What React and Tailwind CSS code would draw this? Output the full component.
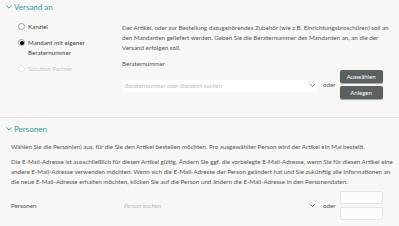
import React from "react";

function Chevron({ className = "" }) {
  return (
    <svg viewBox="0 0 10 6" className={className} fill="none" stroke="currentColor" strokeWidth="1.6" strokeLinecap="round" strokeLinejoin="round">
      <path d="M1 1l4 4 4-4" />
    </svg>
  );
}

function SectionHeader({ title }) {
  return (
    <div className="flex items-center gap-[2px] pl-[6px] text-[#2ea3a3] text-[8px] leading-[10px]">
      <Chevron className="w-[6px] h-[4px]" />
      <span>{title}</span>
    </div>
  );
}

function Radio({ checked, disabled, children }) {
  return (
    <div className={`flex items-start gap-[3px] ${disabled ? "text-[#c8c8c8]" : "text-[#444]"}`}>
      <span
        className={`mt-[1px] w-[7px] h-[7px] shrink-0 rounded-full border flex items-center justify-center bg-white ${
          disabled ? "border-[#e0e0e0]" : "border-[#999]"
        }`}
      >
        {checked && <span className="w-[4px] h-[4px] rounded-full bg-black" />}
      </span>
      <span className="leading-[10px]">{children}</span>
    </div>
  );
}

function ActionButtons({ disabled }) {
  const base = "w-[43px] h-[13px] rounded-[2px] text-[6px] flex items-center justify-center";
  const style = disabled
    ? "border border-[#e6e6e6] bg-[#fbfbfb] text-white"
    : "bg-[#5a605e] text-white shadow-[0_1px_1px_rgba(0,0,0,0.35)]";
  return (
    <div className="flex flex-col gap-[3px]">
      <button className={`${base} ${style}`}>Auswählen</button>
      <button className={`${base} ${style}`}>Anlegen</button>
    </div>
  );
}

function Lines({ lines, className = "" }) {
  return (
    <p className={`leading-[10px] whitespace-nowrap ${className}`}>
      {lines.map((l, i) => (
        <span key={i} className="block">
          {l}
        </span>
      ))}
    </p>
  );
}

export default function App() {
  return (
    <div
      className="w-[399px] h-[226px] overflow-hidden bg-[#f8f7f5] text-[#555] text-[6.22px]"
      style={{ fontFamily: "Lato, 'Noto Sans', sans-serif" }}
    >
      {/* Versand an */}
      <div className="pt-[2px] h-[118px] border-b border-[#e4e3e1]">
        <SectionHeader title="Versand an" />
        <div className="flex mt-[10px]">
          <div className="w-[122px] pl-[18px] flex flex-col gap-[6px]">
            <Radio>Kanzlei</Radio>
            <Radio checked>
              Mandant mit eigener
              <br />
              Beraternummer
            </Radio>
            <Radio disabled>Solution Partner</Radio>
          </div>
          <div className="flex-1">
            <Lines
              className="mt-[1px]"
              lines={[
                "Der Artikel, oder zur Bestellung dazugehörendes Zubehör (wie z.B. Einrichtungsbroschüren) soll an",
                "den Mandanten geliefert werden. Geben Sie die Beraternummer des Mandanten an, an die der",
                "Versand erfolgen soll.",
              ]}
            />
            <div className="mt-[6px] leading-[10px]">Beraternummer</div>
            <div className="flex items-center mt-[1px]">
              <div className="w-[196px] h-[12px] bg-white flex items-center justify-between px-[3px] mt-[2px]">
                <span className="italic text-[#bbb]">Beraternummer oder Standort suchen</span>
                <Chevron className="w-[5px] h-[3px] text-[#555]" />
              </div>
              <span className="ml-[5px] mr-[4px]">oder</span>
              <ActionButtons />
            </div>
          </div>
        </div>
      </div>

      {/* Personen */}
      <div className="pt-[6px]">
        <SectionHeader title="Personen" />
        <div className="px-[11px] mt-[8px]">
          <Lines
            lines={[
              "Wählen Sie die Person(en) aus, für die Sie den Artikel bestellen möchten. Pro ausgewählter Person wird der Artikel ein Mal bestellt.",
            ]}
          />
          <Lines
            className="mt-[5px]"
            lines={[
              "Die E-Mail-Adresse ist ausschließlich für diesen Artikel gültig. Ändern Sie ggf. die vorbelegte E-Mail-Adresse, wenn Sie für diesen Artikel eine",
              "andere E-Mail-Adresse verwenden möchten. Wenn sich die E-Mail-Adresse der Person geändert hat und Sie zukünftig alle Informationen an",
              "die neue E-Mail-Adresse erhalten möchten, klicken Sie auf die Person und ändern die E-Mail-Adresse in den Personendaten.",
            ]}
          />
          <div className="flex items-center mt-[4px]">
            <span className="w-[111px]">Personen</span>
            <div className="w-[196px] h-[13px] flex items-center justify-between pl-[2px] pr-[3px]">
              <span className="italic text-[#bbb]">Person suchen</span>
              <Chevron className="w-[5px] h-[3px] text-[#555]" />
            </div>
            <span className="ml-[5px] mr-[4px]">oder</span>
            <ActionButtons disabled />
          </div>
        </div>
      </div>
    </div>
  );
}
